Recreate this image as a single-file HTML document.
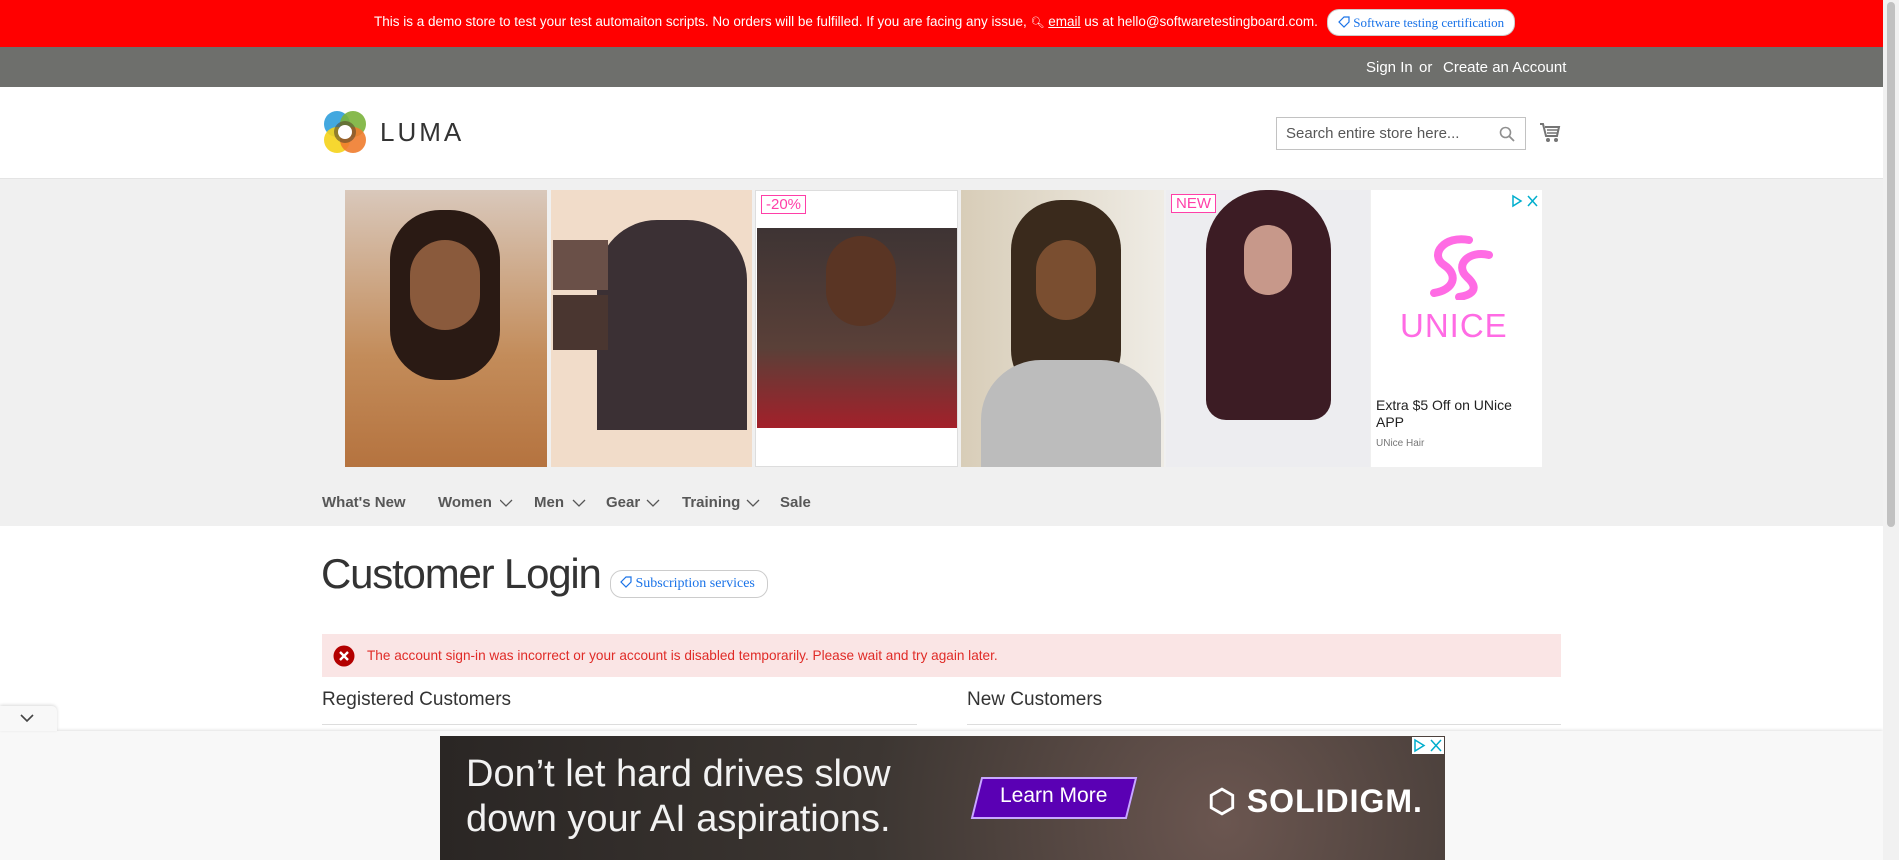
<!DOCTYPE html>
<html><head><meta charset="utf-8">
<style>
*{margin:0;padding:0;box-sizing:border-box}
body{width:1899px;height:860px;overflow:hidden;font-family:"Liberation Sans",sans-serif;background:#fff;position:relative;color:#333}
.abs{position:absolute}
.top{left:0;top:0;width:1883px;height:47px;background:#ff0000;color:#fff;font-size:13.5px}
.top .msg{position:absolute;left:374px;top:14px;white-space:nowrap}
.pill{position:absolute;background:#fff;border:1px solid #ccc;border-radius:12px;color:#1a73e8;font-family:"Liberation Serif",serif;font-size:13px;white-space:nowrap}
.gray{left:0;top:47px;width:1883px;height:40px;background:#6e6f6c;color:#fff;font-size:15px}
.header{left:0;top:87px;width:1883px;height:92px;background:#fff;border-bottom:1px solid #e4e4e4}
.adarea{left:0;top:179px;width:1883px;height:347px;background:#f0f0f0}
.panel{position:absolute;top:190px;height:277px;overflow:hidden}
.nav{top:492px;font-weight:bold;font-size:15px;color:#575757;white-space:nowrap}
.scroll{left:1883px;top:0;width:16px;height:860px;background:#f1f1f1}
.scroll div{position:absolute;left:4px;top:2px;width:8px;height:525px;background:#c1c1c1;border-radius:4px}
</style></head><body>
<div class="abs top">
 <div class="msg">This is a demo store to test your test automaiton scripts. No orders will be fulfilled. If you are facing any issue, <span style="font-size:11px">&#x1F50D;&#xFE0E;</span> <u>email</u> us at hello@softwaretestingboard.com.</div>
 <div class="pill" style="left:1327px;top:9px;height:27px;width:188px;padding:5px 0 0 10px"><svg width="12" height="12" viewBox="0 0 12 12" style="vertical-align:-1px"><path d="M6 1h5v5L6 11 1 6z" fill="none" stroke="#1a73e8" stroke-width="1.2"/></svg> Software testing certification</div>
</div>
<div class="abs gray"><span class="abs" style="left:1366px;top:12px">Sign In</span><span class="abs" style="left:1419px;top:12px">or</span><span class="abs" style="left:1443px;top:12px">Create an Account</span></div>
<div class="abs header">
 <svg class="abs" style="left:322px;top:22px" width="46" height="46" viewBox="0 0 46 46">
  <circle cx="15" cy="15" r="13" fill="#2f9fdc" opacity=".9"/><circle cx="31" cy="15" r="13" fill="#7ab23b" opacity=".9"/>
  <circle cx="15" cy="31" r="13" fill="#f5d319" opacity=".9"/><circle cx="31" cy="31" r="13" fill="#f07c2e" opacity=".9"/>
  <circle cx="23" cy="23" r="11" fill="#5b4a2a" opacity=".6"/><circle cx="23" cy="23" r="7" fill="#fff"/>
 </svg>
 <div class="abs" style="left:380px;top:30px;font-size:26px;letter-spacing:3px;color:#333">LUMA</div>
 <div class="abs" style="left:1276px;top:30px;width:250px;height:33px;border:1px solid #c2c2c2;font-size:15px;color:#575757;padding:7px 0 0 9px">Search entire store here...
  <svg class="abs" style="right:10px;top:8px" width="16" height="16" viewBox="0 0 16 16"><circle cx="6.5" cy="6.5" r="5" fill="none" stroke="#8f8f8f" stroke-width="1.6"/><path d="M10 10l5 5" stroke="#8f8f8f" stroke-width="1.8"/></svg></div>
 <svg class="abs" style="left:1539px;top:35px" width="22" height="22" viewBox="0 0 22 22"><path d="M1 2h3l3 12h11l2-9H6" fill="none" stroke="#757575" stroke-width="2"/><path d="M8 8h11M8 11h10" stroke="#757575" stroke-width="1.5"/><circle cx="9" cy="18" r="2" fill="#757575"/><circle cx="17" cy="18" r="2" fill="#757575"/></svg>
</div>
<div class="abs adarea"></div>
<div class="panel" style="left:345px;width:202px;background:linear-gradient(180deg,#d9c8bb,#c38c5a 60%,#b5733f)"><div class="abs" style="left:45px;top:20px;width:110px;height:170px;border-radius:50px;background:#2a1a14"></div><div class="abs" style="left:65px;top:50px;width:70px;height:90px;border-radius:35px;background:#8a5a3c"></div></div>
<div class="panel" style="left:551px;width:201px;background:#f1dcc9"><div class="abs" style="left:46px;top:30px;width:150px;height:210px;background:#3b3034;border-radius:60px 60px 0 0"></div><div class="abs" style="left:2px;top:50px;width:55px;height:50px;background:#6a5048"></div><div class="abs" style="left:2px;top:105px;width:55px;height:55px;background:#4a3630"></div></div>
<div class="panel" style="left:755px;width:203px;background:#fff;border:1px solid #ddd"><div class="abs" style="left:1px;top:37px;width:200px;height:200px;background:linear-gradient(180deg,#3e3434,#5a4038 60%,#a3202a)"></div><div class="abs" style="left:70px;top:45px;width:70px;height:90px;border-radius:35px;background:#5a3524"></div><div class="abs" style="left:5px;top:4px;border:1px solid #ff3fa8;color:#ff3fa8;font-size:15px;padding:0 4px">-20%</div></div>
<div class="panel" style="left:961px;width:203px;background:linear-gradient(90deg,#d8cdb8,#efece5)"><div class="abs" style="left:50px;top:10px;width:110px;height:200px;border-radius:50px;background:#3a2a1c"></div><div class="abs" style="left:20px;top:170px;width:180px;height:110px;border-radius:60px 60px 0 0;background:#bcbcbc"></div><div class="abs" style="left:75px;top:50px;width:60px;height:80px;border-radius:30px;background:#7a4e30"></div></div>
<div class="panel" style="left:1166px;width:204px;background:#ededf0"><div class="abs" style="left:40px;top:0;width:125px;height:230px;border-radius:60px 60px 20px 20px;background:#3c1c24"></div><div class="abs" style="left:78px;top:35px;width:48px;height:70px;border-radius:24px;background:#c7988a"></div><div class="abs" style="left:5px;top:4px;border:1px solid #ff3fa8;color:#ff3fa8;font-size:15px;padding:0 4px;background:#fff">NEW</div></div>
<div class="panel" style="left:1371px;width:171px;background:#fff">
 <svg class="abs" style="left:140px;top:4px" width="30" height="14" viewBox="0 0 30 14"><path d="M2 2l8 5-8 5z" fill="none" stroke="#00aecd" stroke-width="1.5"/><path d="M17 2l9 10M26 2l-9 10" stroke="#00aecd" stroke-width="1.5"/></svg>
 <svg class="abs" style="left:48px;top:45px" width="80" height="65" viewBox="0 0 80 65"><path d="M50 5c-25-5-40 15-25 25s10 25-10 28M70 20c-20-5-35 10-22 22s5 18-8 20" fill="none" stroke="#ff6be4" stroke-width="8" stroke-linecap="round"/></svg>
 <div class="abs" style="left:29px;top:117px;font-size:33px;color:#ff6be4;letter-spacing:1px">UNICE</div>
 <div class="abs" style="left:5px;top:207px;font-size:14px;line-height:17px;color:#222">Extra $5 Off on UNice<br>APP</div>
 <div class="abs" style="left:5px;top:248px;font-size:10px;color:#777">UNice Hair</div>
</div>
<div class="abs nav" style="left:322px;top:494px">What's New</div>
<div class="abs nav" style="left:438px;top:494px">Women</div>
<div class="abs nav" style="left:534px;top:494px">Men</div>
<div class="abs nav" style="left:606px;top:494px">Gear</div>
<div class="abs nav" style="left:682px;top:494px">Training</div>
<div class="abs nav" style="left:780px;top:494px">Sale</div>
<svg class="abs" style="left:500px;top:498px" width="260" height="12" viewBox="0 0 260 12"><g fill="none" stroke="#575757" stroke-width="1.3"><path d="M0 2l6 6 6-6"/><path d="M73 2l6 6 6-6"/><path d="M147 2l6 6 6-6"/><path d="M247 2l6 6 6-6"/></g></svg>
<div class="abs" style="left:0;top:526px;width:1883px;height:334px;background:#fff"></div>
<div class="abs" style="left:321px;top:550px;font-size:42px;letter-spacing:-1.2px;color:#333;white-space:nowrap">Customer Login</div>
<div class="pill" style="left:610px;top:570px;height:28px;width:158px;padding:5px 0 0 9px;font-size:14px"><svg width="12" height="12" viewBox="0 0 12 12" style="vertical-align:-1px"><path d="M6 1h5v5L6 11 1 6z" fill="none" stroke="#1a73e8" stroke-width="1.2"/></svg> Subscription services</div>
<div class="abs" style="left:322px;top:634px;width:1239px;height:43px;background:#fae5e5"></div>
<svg class="abs" style="left:333px;top:645px" width="22" height="22" viewBox="0 0 22 22"><circle cx="11" cy="11" r="10.5" fill="#b30000"/><path d="M7 7l8 8M15 7l-8 8" stroke="#fff" stroke-width="2.4"/></svg>
<div class="abs" style="left:367px;top:648px;font-size:13.6px;color:#e02b27">The account sign-in was incorrect or your account is disabled temporarily. Please wait and try again later.</div>
<div class="abs" style="left:322px;top:689px;font-size:19px;color:#333">Registered Customers</div>
<div class="abs" style="left:967px;top:689px;font-size:19px;color:#333">New Customers</div>
<div class="abs" style="left:322px;top:724px;width:595px;height:1px;background:#ddd"></div>
<div class="abs" style="left:967px;top:724px;width:594px;height:1px;background:#ddd"></div>
<div class="abs" style="left:0;top:731px;width:1883px;height:129px;background:#f8f8f8;box-shadow:0 -1px 3px rgba(0,0,0,.12)"></div>
<div class="abs" style="left:0;top:706px;width:57px;height:25px;background:#f8f8f8;border-radius:0 5px 0 0;box-shadow:0 -1px 3px rgba(0,0,0,.15)"><svg class="abs" style="left:20px;top:8px" width="14" height="9" viewBox="0 0 14 9"><path d="M1 1l6 6 6-6" fill="none" stroke="#444" stroke-width="1.6"/></svg></div>
<div class="abs" style="left:440px;top:736px;width:1005px;height:124px;background:radial-gradient(circle at 78% 70%,#6b5650,#3c3632 45%,#2a2624)"></div>
<div class="abs" style="left:466px;top:752px;font-size:38px;color:#f2f2f2;line-height:45px;white-space:nowrap">Don’t let hard drives slow<br>down your AI aspirations.</div>
<div class="abs" style="left:976px;top:777px;width:156px;height:42px;background:#5a00b4;border:2px solid #c8a8ff;transform:skewX(-14deg)"></div>
<div class="abs" style="left:1000px;top:784px;font-size:21px;color:#fff">Learn More</div>
<div class="abs" style="left:1208px;top:782px;font-size:32px;color:#fff;font-weight:bold;letter-spacing:1px">&#x2B21; SOLIDIGM.</div>
<div class="abs" style="left:1412px;top:737px;width:32px;height:17px;background:#fff"><svg width="32" height="17" viewBox="0 0 32 17"><path d="M3 3l9 5.5-9 5.5z" fill="none" stroke="#00aecd" stroke-width="1.5"/><path d="M19 3l10 11M29 3l-10 11" stroke="#00aecd" stroke-width="1.5"/></svg></div>
<div class="abs scroll"><div></div></div>
</body></html>
